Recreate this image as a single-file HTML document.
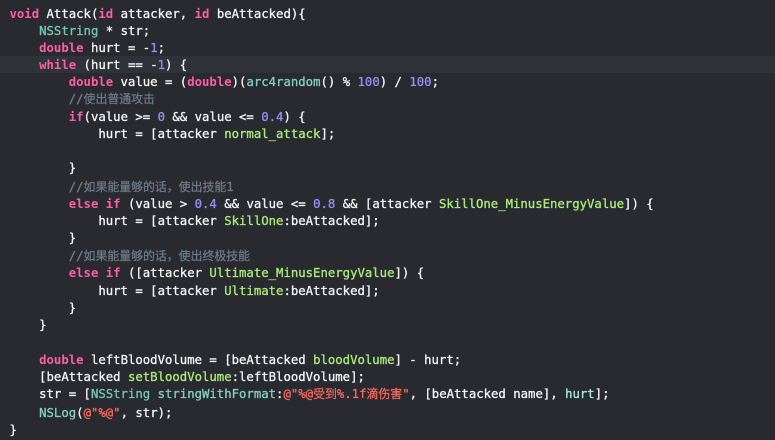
<!DOCTYPE html>
<html><head><meta charset="utf-8">
<style>
html,body{margin:0;padding:0;background:#292a30;}
#c{position:relative;width:775px;height:440px;overflow:hidden;background:#292a30;font-family:"DejaVu Sans Mono","Noto Sans CJK SC",monospace;font-size:12.3px;color:#f4f4f5;-webkit-text-stroke:0.3px currentColor;}
#hl{position:absolute;left:0;top:56px;width:775px;height:17px;background:#2f3239;}
.l{position:absolute;left:9.5px;white-space:pre;line-height:16px;height:16px;}
.k{color:#fc5fa3;font-weight:bold;-webkit-text-stroke:0;}
.t{color:#72c9b2;}
.f{color:#82d0c0;}
.g{color:#a8ec7a;}
.n{color:#9a8bf0;}
.c{color:#707c89;}
.s{color:#fc6a5d;}
.m{color:#a7ebdd;}
.z{font-size:11.9px;font-family:"Noto Sans CJK SC",sans-serif;-webkit-text-stroke:0.2px currentColor;}
</style></head><body><div id="c">
<div id="hl"></div>
<div class="l" style="top:6px"><span class="k">void</span> Attack(<span class="k">id</span> attacker, <span class="k">id</span> beAttacked){</div>
<div class="l" style="top:23px">    <span class="t">NSString</span> * str;</div>
<div class="l" style="top:40px">    <span class="k">double</span> hurt = -<span class="n">1</span>;</div>
<div class="l" style="top:57px">    <span class="k">while</span> (hurt == -<span class="n">1</span>) {</div>
<div class="l" style="top:74px">        <span class="k">double</span> value = (<span class="k">double</span>)(<span class="f">arc4random</span>() % <span class="n">100</span>) / <span class="n">100</span>;</div>
<div class="l c" style="top:91px">        //<span class="z">使出普通攻击</span></div>
<div class="l" style="top:109px">        <span class="k">if</span>(value &gt;= <span class="n">0</span> &amp;&amp; value &lt;= <span class="n">0.4</span>) {</div>
<div class="l" style="top:126px">            hurt = [attacker <span class="g">normal_attack</span>];</div>
<div class="l" style="top:160px">        }</div>
<div class="l c" style="top:179px">        //<span class="z">如果能量够的话，使出技能</span>1</div>
<div class="l" style="top:196px">        <span class="k">else if</span> (value &gt; <span class="n">0.4</span> &amp;&amp; value &lt;= <span class="n">0.8</span> &amp;&amp; [attacker <span class="g">SkillOne_MinusEnergyValue</span>]) {</div>
<div class="l" style="top:213px">            hurt = [attacker <span class="g">SkillOne</span>:beAttacked];</div>
<div class="l" style="top:230px">        }</div>
<div class="l c" style="top:248px">        //<span class="z">如果能量够的话，使出终极技能</span></div>
<div class="l" style="top:265px">        <span class="k">else if</span> ([attacker <span class="g">Ultimate_MinusEnergyValue</span>]) {</div>
<div class="l" style="top:283px">            hurt = [attacker <span class="g">Ultimate</span>:beAttacked];</div>
<div class="l" style="top:300px">        }</div>
<div class="l" style="top:317px">    }</div>
<div class="l" style="top:352px">    <span class="k">double</span> leftBloodVolume = [beAttacked <span class="g">bloodVolume</span>] - hurt;</div>
<div class="l" style="top:369px">    [beAttacked <span class="g">setBloodVolume</span>:leftBloodVolume];</div>
<div class="l" style="top:386px">    str = [<span class="t">NSString</span> <span class="f">stringWithFormat</span>:<span class="s">@"%@<span class="z">受到</span>%.1f<span class="z">滴伤害</span>"</span>, [beAttacked name], <span class="m">hurt</span>];</div>
<div class="l" style="top:405px">    <span class="f">NSLog</span>(<span class="s">@"%@"</span>, str);</div>
<div class="l" style="top:422px">}</div>
</div></body></html>
